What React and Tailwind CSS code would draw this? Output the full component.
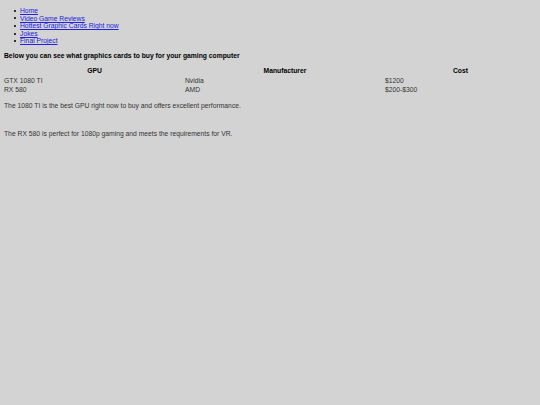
export default function App() {
  const links = ['Home', 'Video Game Reviews', 'Hottest Graphic Cards Right now', 'Jokes', 'Final Project'];
  const rows = [
    ['GTX 1080 TI', 'Nvidia', '$1200'],
    ['RX 580', 'AMD', '$200-$300'],
  ];

  return (
    <div
      className="min-h-[405px] w-[540px] bg-[#d3d3d3] px-[4px] pt-[7px] text-[6.75px] leading-[7.6px] text-[#333]"
      style={{ fontFamily: '"Liberation Sans", Arial, sans-serif' }}
    >
      <ul className="pl-[16px]">
        {links.map((l) => (
          <li key={l} className="flex items-center">
            <span className="-ml-[6px] mr-[4px] h-[2px] w-[2px] bg-[#333]" />
            <a href="#" className="text-[#2222dd] underline">
              {l}
            </a>
          </li>
        ))}
      </ul>

      <p className="mt-[7px] font-bold text-black">Below you can see what graphics cards to buy for your gaming computer</p>

      <table className="mt-[6px] w-[532px] border-separate border-spacing-0">
        <thead>
          <tr className="font-bold text-black">
            <th className="w-[181px] py-[1.5px] text-center">GPU</th>
            <th className="w-[200px] py-[1.5px] text-center">Manufacturer</th>
            <th className="py-[1.5px] text-center">Cost</th>
          </tr>
        </thead>
        <tbody>
          {rows.map((r) => (
            <tr key={r[0]}>
              {r.map((c, i) => (
                <td key={i} className="py-[0.8px] text-left">
                  {c}
                </td>
              ))}
            </tr>
          ))}
        </tbody>
      </table>

      <p className="mt-[7px]">The 1080 TI is the best GPU right now to buy and offers excellent performance.</p>
      <p className="mt-[21px]">The RX 580 is perfect for 1080p gaming and meets the requirements for VR.</p>
    </div>
  );
}
